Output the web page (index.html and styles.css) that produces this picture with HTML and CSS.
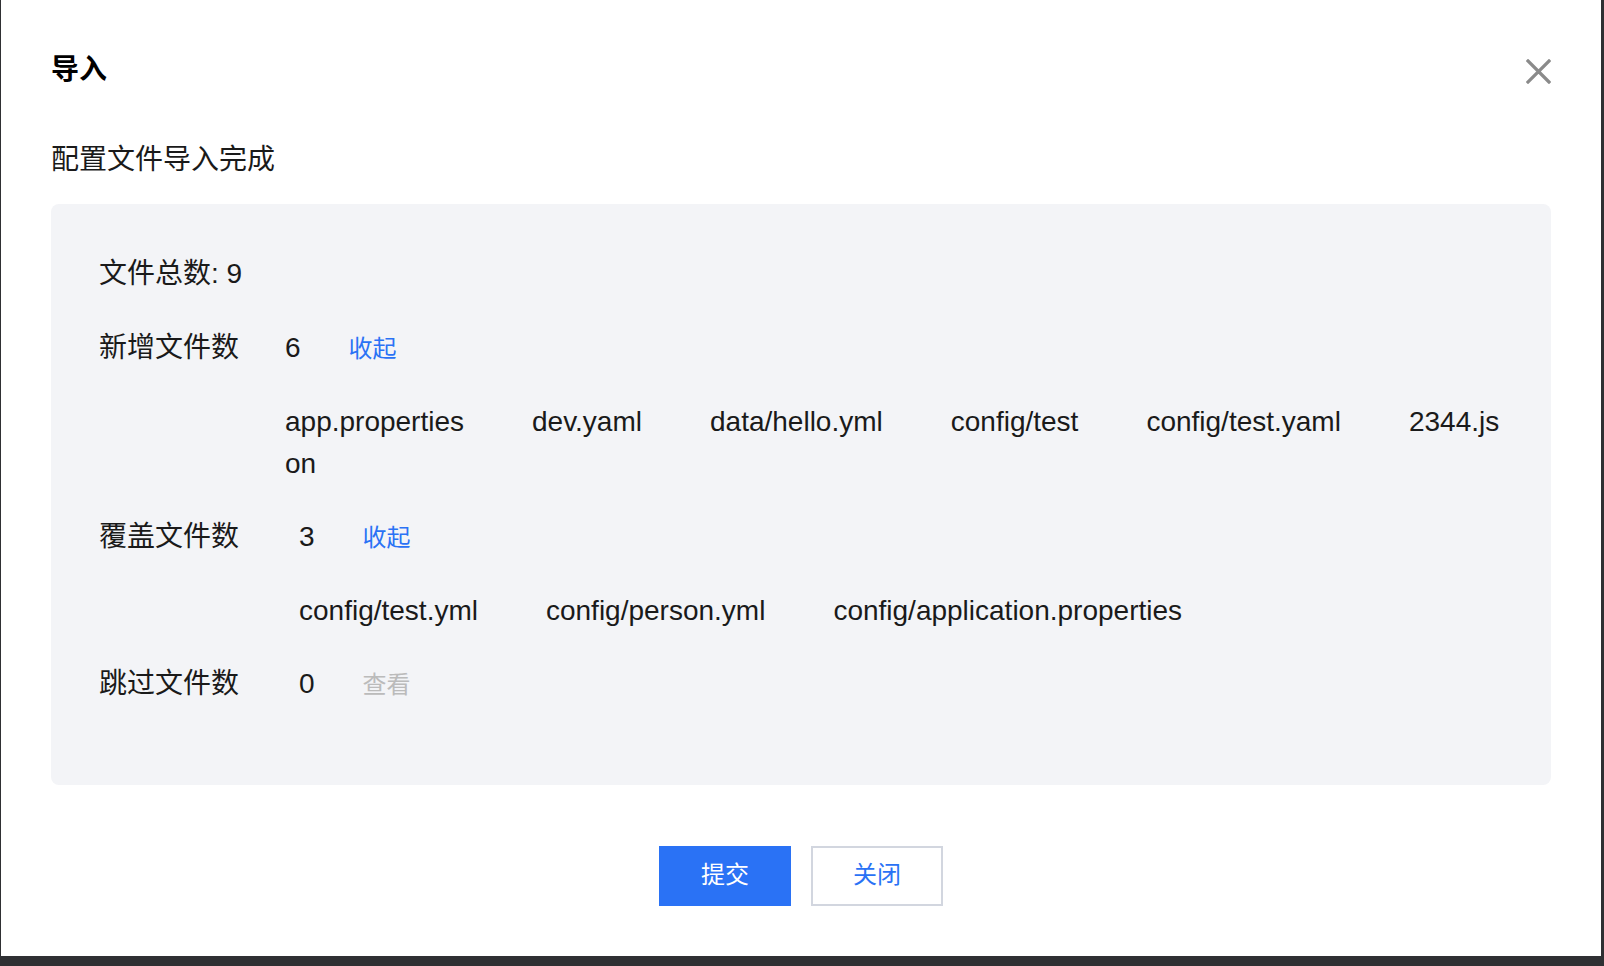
FILE: index.html
```html
<!DOCTYPE html>
<html lang="zh-CN">
<head>
<meta charset="utf-8">
<title>导入</title>
<link rel="stylesheet" href="styles.css">
</head>
<body>
<div class="dialog">
  <div class="dialog-header">
    <h1 class="dialog-title">导入</h1>
    <button class="dialog-close" aria-label="关闭">
      <svg width="25" height="25" viewBox="0 0 25 25"><path d="M2 2 L23 23 M23 2 L2 23" stroke="#8a8a8a" stroke-width="3.2" stroke-linecap="square" fill="none"/></svg>
    </button>
  </div>
  <p class="dialog-subtitle">配置文件导入完成</p>
  <div class="result">
    <div class="row"><span class="total">文件总数: 9</span></div>
    <div class="row"><span class="label label--narrow">新增文件数</span><span class="value">6</span><a class="link">收起</a></div>
    <div class="files files--narrow"><span class="file">app.properties</span><span class="file">dev.yaml</span><span class="file">data/hello.yml</span><span class="file">config/test</span><span class="file">config/test.yaml</span><span class="file">2344.json</span></div>
    <div class="row"><span class="label">覆盖文件数</span><span class="value">3</span><a class="link">收起</a></div>
    <div class="files"><span class="file">config/test.yml</span><span class="file">config/person.yml</span><span class="file">config/application.properties</span></div>
    <div class="row"><span class="label">跳过文件数</span><span class="value">0</span><a class="link link--disabled">查看</a></div>
  </div>
  <div class="dialog-footer">
    <button class="btn btn--primary">提交</button>
    <button class="btn btn--default">关闭</button>
  </div>
</div>
</body>
</html>
```

FILE: styles.css
```css
html, body {
  margin: 0;
  padding: 0;
}
body {
  background: #2f3033;
  font-family: "Liberation Sans", "Noto Sans CJK SC", sans-serif;
  color: #1a1a1a;
  width: 1604px;
  height: 966px;
  overflow: hidden;
}
.dialog {
  box-sizing: border-box;
  margin: 0 3px 0 1px;
  height: 956px;
  background: #fff;
  padding: 48px 50px 0 50px;
}
.dialog-header {
  display: flex;
  justify-content: space-between;
  align-items: flex-start;
  height: 40px;
}
.dialog-title {
  margin: 2px 0 0 0;
  font-size: 28px;
  line-height: 40px;
  font-weight: 700;
  color: #000;
}
.dialog-close {
  border: 0;
  background: none;
  padding: 0;
  margin-top: 11px;
  width: 25px;
  height: 25px;
  display: block;
  cursor: pointer;
}
.dialog-close svg {
  display: block;
}
.dialog-subtitle {
  margin: 52px 0 0 0;
  font-size: 28px;
  line-height: 40px;
  color: #1a1a1a;
}
.result {
  margin-top: 24px;
  background: #f3f4f7;
  border-radius: 8px;
  padding: 49px 44px 78px 48px;
  height: 581px;
  box-sizing: border-box;
  font-size: 28px;
  line-height: 42px;
}
.row {
  display: flex;
  align-items: baseline;
  margin-bottom: 32px;
}
.row:last-child {
  margin-bottom: 0;
}
.label {
  width: 200px;
  flex: none;
}
.label--narrow {
  width: 186px;
}
.value {
  margin-right: 48px;
}
.link {
  font-size: 24px;
  color: #2a72f5;
  cursor: pointer;
}
.link--disabled {
  color: #bbbbbb;
  cursor: default;
}
.files {
  padding-left: 200px;
  word-break: break-all;
  margin-top: -1px;
  margin-bottom: 31px;
}
.files--narrow {
  padding-left: 186px;
}
.file {
  margin-right: 68px;
}
.dialog-footer {
  display: flex;
  justify-content: center;
  gap: 20px;
  margin-top: 61px;
}
.btn {
  box-sizing: border-box;
  width: 132px;
  height: 60px;
  font-family: "Liberation Sans", "Noto Sans CJK SC", sans-serif;
  font-size: 24px;
  line-height: 30px;
  border-radius: 0;
  cursor: pointer;
  padding: 0 0 2px 0;
}
.btn--primary {
  background: #2a72f5;
  border: 0;
  color: #fff;
}
.btn--default {
  background: #fff;
  border: 2px solid #d2d6df;
  color: #2a72f5;
}
```
